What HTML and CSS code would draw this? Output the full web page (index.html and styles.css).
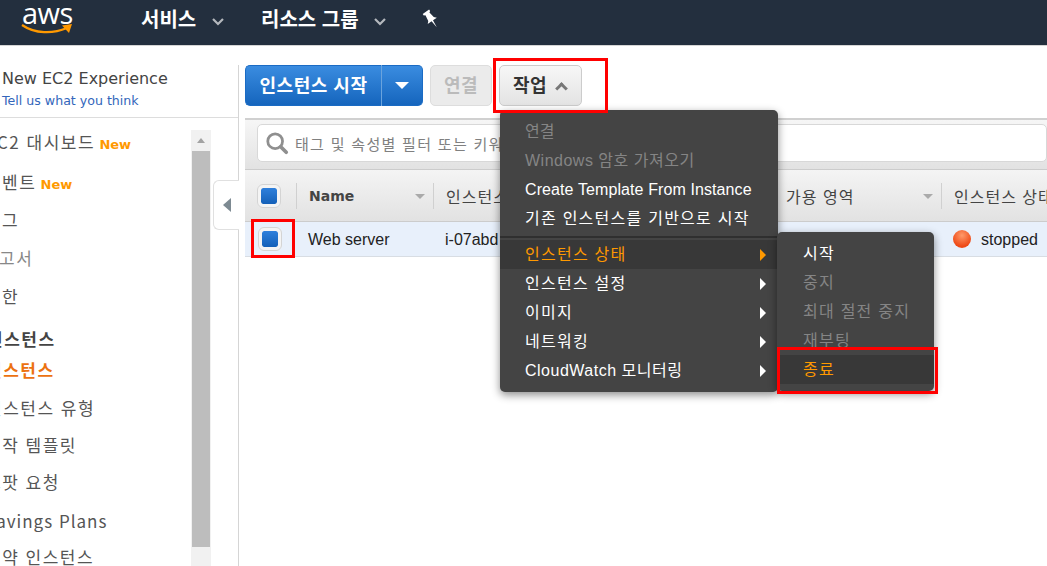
FILE: index.html
```html
<!DOCTYPE html>
<html lang="ko">

<head>
  <meta charset="UTF-8" />
  <meta name="viewport" content="width=device-width, initial-scale=1" />
  <title>EC2 인스턴스</title>
  <link rel="stylesheet" href="styles.css">
</head>

<body>
  <header class="topbar">
    <div class="logo">
      <span class="logo-text">aws</span>
      <svg class="logo-smile" width="52" height="11" viewBox="0 0 52 11">
        <path d="M1 1 C14 10 32 10 46 4" fill="none" stroke="#f90" stroke-width="2.2" />
        <path d="M41 1.5 L51 0 L48 9 Z" fill="#f90" />
      </svg>
    </div>
    <nav class="topnav">
      <span class="topnav-item services">서비스</span>
      <svg class="chev" width="12" height="8" viewBox="0 0 12 8"><path d="M1 1 L6 6 L11 1" fill="none" stroke="#b4b8bd" stroke-width="2.2" /></svg>
      <span class="topnav-item groups">리소스 그룹</span>
      <svg class="chev" width="12" height="8" viewBox="0 0 12 8"><path d="M1 1 L6 6 L11 1" fill="none" stroke="#b4b8bd" stroke-width="2.2" /></svg>
      <svg class="pin" width="18" height="20" viewBox="0 0 16 18">
        <path transform="rotate(-35 8 9)" d="M4.5 1 H11.5 V2.6 L10.2 3.4 L11 9 L13 11 H8.8 L8 18 L7.2 11 H3 L5 9 L5.8 3.4 L4.5 2.6 Z" fill="#fff" />
      </svg>
    </nav>
  </header>

  <div class="layout">
    <aside class="sidebar">
      <div class="promo">
        <div class="promo-title">New EC2 Experience</div>
        <div class="promo-link">Tell us what you think</div>
      </div>
      <div class="side-body">
        <ul class="side-list">
          <li class="r1">C2 대시보드 <b class="new">New</b></li>
          <li class="r2 cut">벤트 <b class="new">New</b></li>
          <li class="r3 cut">그</li>
          <li class="r4 grey">고서</li>
          <li class="r5 cut">한</li>
          <li class="r6 heading">인스턴스</li>
          <li class="r7 active">인스턴스</li>
          <li class="r8">인스턴스 유형</li>
          <li class="r9">시작 템플릿</li>
          <li class="r10">스팟 요청</li>
          <li class="r11">Savings Plans</li>
          <li class="r12">예약 인스턴스</li>
        </ul>
        <div class="scrollbar">
          <div class="scroll-up"></div>
          <div class="scroll-thumb"></div>
        </div>
      </div>
      <div class="collapse-tab"><span class="collapse-arrow"></span></div>
    </aside>

    <main class="content">
      <div class="toolbar">
        <div class="btn-split">
          <button class="btn btn-primary btn-start">인스턴스 시작</button>
          <button class="btn btn-primary btn-caret"><span class="caret-down"></span></button>
        </div>
        <button class="btn btn-disabled">연결</button>
        <button class="btn btn-action">작업 <span class="caret-up"></span></button>
      </div>

      <div class="searchbar">
        <div class="search-box">
          <svg width="24" height="24" viewBox="0 0 26 26">
            <circle cx="11" cy="11" r="8" fill="#fff" stroke="#8f8f8f" stroke-width="3" />
            <path d="M17 17 L23 23" stroke="#8f8f8f" stroke-width="4" stroke-linecap="round" />
          </svg>
          <span class="search-text">태그 및 속성별 필터 또는 키워</span>
        </div>
      </div>

      <div class="table-head">
        <div class="cell-check"><span class="check"></span></div>
        <div class="th th-name">Name<span class="sort"></span></div>
        <div class="th th-id">인스턴스</div>
        <div class="th th-type"></div>
        <div class="th th-zone">가용 영역<span class="sort"></span></div>
        <div class="th th-state">인스턴스 상태</div>
      </div>
      <div class="table-row">
        <div class="cell-check"><span class="check"></span></div>
        <div class="td td-name">Web server</div>
        <div class="td td-id">i-07abd</div>
        <div class="td td-gap"></div>
        <div class="td td-state"><span class="dot"></span>stopped</div>
      </div>
    </main>
  </div>

  <div class="menu menu-main">
    <div class="menu-item off">연결</div>
    <div class="menu-item off mixed">Windows 암호 가져오기</div>
    <div class="menu-item latin">Create Template From Instance</div>
    <div class="menu-item ko">기존 인스턴스를 기반으로 시작</div>
    <div class="menu-sep"></div>
    <div class="menu-item on sub ko">인스턴스 상태</div>
    <div class="menu-item sub ko">인스턴스 설정</div>
    <div class="menu-item sub ko">이미지</div>
    <div class="menu-item sub ko">네트워킹</div>
    <div class="menu-item sub mixed">CloudWatch 모니터링</div>
  </div>

  <div class="menu menu-sub">
    <div class="menu-item ko">시작</div>
    <div class="menu-item off ko">중지</div>
    <div class="menu-item off ko">최대 절전 중지</div>
    <div class="menu-item off ko">재부팅</div>
    <div class="menu-item on ko">종료</div>
  </div>

  <div class="mark mark-action"></div>
  <div class="mark mark-row"></div>
  <div class="mark mark-end"></div>
</body>

</html>
```

FILE: styles.css
```css
* {
  margin: 0;
  padding: 0;
  box-sizing: border-box;
}

html,
body {
  height: 100%;
  overflow: hidden;
}

body {
  font-family: 'DejaVu Sans', 'Noto Sans CJK KR', sans-serif;
  background: white;
  color: #444;
  position: relative;
}

/* top bar */
.topbar {
  height: 46px;
  background: #232f3e;
  display: flex;
  align-items: center;
  border-bottom: 1px solid #d5d5d5;
}

.logo {
  width: 141px;
  padding-left: 21px;
  height: 45px;
}

.logo-text {
  display: block;
  font-family: 'Open Sans', sans-serif;
  font-size: 29px;
  line-height: 20px;
  letter-spacing: -0.5px;
  color: white;
  margin-top: 3px;
  padding-left: 1px;
}

.logo-smile {
  display: block;
  margin-top: 1px;
}

.topnav {
  display: flex;
  align-items: center;
  color: white;
  margin-top: -9px;
}

.topnav-item {
  font-family: 'Noto Sans CJK KR', sans-serif;
  font-size: 20px;
  font-weight: 700;
}

.chev {
  margin-left: 15px;
  margin-top: 7px;
}

.services {
  width: 56px;
}

.groups {
  margin-left: 37px;
  width: 98px;
}

.pin {
  margin-left: 36px;
  margin-top: 2px;
}

/* layout */
.layout {
  display: flex;
  height: 520px;
}

.sidebar {
  width: 239px;
  margin-top: 19px;
  border-right: 1px solid #d5d5d5;
  position: relative;
  flex-shrink: 0;
}

.promo {
  height: 53px;
  border-bottom: 1px solid #ddd;
  padding-left: 2px;
}

.promo-title {
  font-size: 16px;
  line-height: 28px;
  color: #444;
}

.promo-link {
  font-size: 12.6px;
  line-height: 16px;
  color: #3366bb;
}

.side-body {
  display: flex;
  height: 448px;
  overflow: hidden;
  padding-top: 12px;
}

.side-list {
  list-style: none;
  width: 191px;
  overflow: hidden;
  font-size: 17px;
  color: #555;
  margin-top: -2px;
  letter-spacing: 1.5px;
}

.side-list li {
  height: 38px;
  line-height: 28px;
  white-space: nowrap;
  font-family: 'Noto Sans CJK KR', sans-serif;
}

.r1 {
  margin-left: -3px;
  height: 40px !important;
}

.cut {
  margin-left: 2px;
}

.grey {
  color: #888;
  margin-left: -1px;
}

.side-list .heading {
  font-weight: 700;
  color: #444;
  margin-left: -13px;
  margin-top: 5px;
  height: 31px !important;
}

.side-list .active {
  font-weight: 700;
  color: #ec7211;
  margin-left: -14px;
}

.r8 {
  margin-left: -14px;
  height: 37px !important;
}

.r9 {
  margin-left: -15px;
  height: 37px !important;
}

.r10 {
  margin-left: -15px;
  height: 39px !important;
}

.side-list .r11 {
  margin-left: -15px;
  height: 36px;
  letter-spacing: 1px;
}

.r12 {
  margin-left: -15px;
}

.new {
  font-family: 'DejaVu Sans', sans-serif;
  font-size: 13px;
  font-weight: 700;
  letter-spacing: 0;
  color: #ff9900;
  margin-left: -2px;
}

.scrollbar {
  width: 20px;
  background: #f1f1f1;
  height: 436px;
  padding: 0 1px;
}

.scroll-up {
  height: 21px;
  position: relative;
}

.scroll-up::after {
  content: "";
  position: absolute;
  left: 5px;
  top: 8px;
  border-left: 4px solid transparent;
  border-right: 4px solid transparent;
  border-bottom: 5px solid #a3a3a3;
}

.scroll-thumb {
  height: 396px;
  background: #bdbdbd;
}

.collapse-tab {
  position: absolute;
  left: 213px;
  top: 115px;
  width: 26px;
  height: 50px;
  background: white;
  border: 1px solid #e0e0e0;
  border-right: none;
  border-radius: 6px 0 0 6px;
  display: flex;
  align-items: center;
  justify-content: center;
}

.collapse-arrow {
  border-top: 7px solid transparent;
  border-bottom: 7px solid transparent;
  border-right: 8px solid #7d8a92;
}

/* main area */
.content {
  flex: 1;
  padding: 19px 0 0 6px;
  overflow: hidden;
}

.toolbar {
  display: flex;
  gap: 7px;
  height: 53px;
}

.btn {
  height: 41px;
  border-radius: 5px;
  font-family: 'Noto Sans CJK KR', sans-serif;
  font-size: 18px;
  font-weight: 700;
  letter-spacing: 0.5px;
  border: 1px solid #ccc;
  padding-bottom: 4px;
}

.btn-split {
  display: flex;
}

.btn-primary {
  color: white;
  background: linear-gradient(#3a8ce0, #1565bd);
  border-color: #1a6bc4;
}

.btn-start {
  width: 137px;
  border-radius: 5px 0 0 5px;
  border-right: 1px solid #6aa3dd;
}

.btn-caret {
  width: 41px;
  border-radius: 0 5px 5px 0;
  border-left: none;
  padding-bottom: 0;
  display: flex;
  align-items: center;
  justify-content: center;
}

.caret-down {
  border-left: 7px solid transparent;
  border-right: 7px solid transparent;
  border-top: 7px solid white;
}

.btn-disabled {
  width: 62px;
  color: #bbb;
  background: #ebebeb;
  border-color: #ddd;
}

.btn-action {
  width: 83px;
  color: #333;
  background: linear-gradient(#f7f7f7, #e3e3e3);
  display: flex;
  align-items: center;
  padding-left: 13px;
  gap: 10px;
}

.caret-up {
  width: 9px;
  height: 9px;
  border-left: 3px solid #777;
  border-top: 3px solid #777;
  transform: rotate(45deg);
  margin-top: 9px;
}

.searchbar {
  height: 52px;
  border-top: 2px solid #d0d0d0;
  background: linear-gradient(#f6f6f6, #e2e2e2);
  padding: 4px 0 0 12px;
  border-bottom: 1px solid #ccc;
}

.search-box {
  height: 38px;
  background: white;
  border: 1px solid #d8d8d8;
  border-radius: 5px;
  display: flex;
  align-items: center;
  padding-left: 7px;
  gap: 6px;
}

.search-text {
  font-family: 'Noto Sans CJK KR', sans-serif;
  font-size: 15px;
  color: #808080;
  white-space: nowrap;
  letter-spacing: 1.3px;
}

.table-head {
  display: flex;
  align-items: center;
  height: 52px;
  background: linear-gradient(#f4f4f4, #e2e2e2);
  border-bottom: 1px solid #ccc;
}

.cell-check {
  width: 51px;
  height: 100%;
  display: flex;
  align-items: center;
  padding-left: 13px;
  flex-shrink: 0;
}

.table-head .cell-check {
  padding-left: 12px;
}

.check {
  width: 24px;
  height: 24px;
  border-radius: 6px;
  border: 4px solid #f4f4f4;
  outline: 1px solid #d4d4d4;
  outline-offset: -1px;
  background: linear-gradient(#2f80dc, #1460b8) padding-box;
}

.th {
  font-size: 14px;
  font-weight: 700;
  color: #444;
  height: 26px;
  line-height: 26px;
  white-space: nowrap;
  border-left: 1px solid #d0d0d0;
  padding-left: 12px;
  position: relative;
  flex-shrink: 0;
  overflow: hidden;
}

.th-name {
  width: 137px;
}

.th-id,
.th-zone,
.th-state {
  font-family: 'Noto Sans CJK KR', sans-serif;
  font-size: 16px;
  font-weight: 400;
  letter-spacing: 1px;
}

.th-id {
  width: 170px;
}

.th-type {
  width: 170px;
}

.th-zone {
  width: 168px;
}

.th-state {
  width: 120px;
  overflow: visible;
}

.sort {
  position: absolute;
  right: 8px;
  top: 11px;
  border-left: 5px solid transparent;
  border-right: 5px solid transparent;
  border-top: 5px solid #aaa;
}

.table-row {
  display: flex;
  align-items: center;
  height: 35px;
  background: #e8f0fb;
  border-bottom: 1px solid #d8dde3;
  font-family: 'Liberation Sans', sans-serif;
  font-size: 16px;
  color: #222;
}

.td {
  padding-top: 2px;
}

.td-name {
  width: 137px;
  padding-left: 12px;
}

.td-id {
  width: 170px;
  padding-left: 12px;
}

.td-gap {
  width: 338px;
}

.td-state {
  display: flex;
  align-items: center;
  gap: 10px;
  padding-left: 12px;
}

.dot {
  width: 18px;
  height: 18px;
  border-radius: 50%;
  margin-top: -2px;
  background: radial-gradient(circle at 50% 30%, #ff9a6a, #ee4a17 70%);
}

/* dropdown menus */
.menu {
  position: absolute;
  background: #444;
  border-radius: 5px;
  box-shadow: 0 3px 8px rgba(0, 0, 0, 0.45);
  font-family: 'Liberation Sans', 'Noto Sans CJK KR', sans-serif;
  font-size: 16px;
  color: white;
}

.menu-main {
  left: 500px;
  top: 110px;
  width: 278px;
  height: 282px;
  padding-top: 7px;
}

.menu-sub {
  left: 777px;
  top: 232px;
  width: 157px;
  height: 159px;
  padding-top: 7px;
}

.menu-item {
  height: 29px;
  line-height: 29px;
  padding-left: 25px;
  white-space: nowrap;
  position: relative;
}

.menu-sub .menu-item {
  padding-left: 26px;
}

.ko {
  letter-spacing: 1.25px;
}

.mixed {
  letter-spacing: 0.5px;
}

.latin {
  letter-spacing: 0.1px;
}

.off {
  color: #858585;
}

.on {
  color: #ff9900;
  background: #383838;
}

.sub::after {
  content: "";
  position: absolute;
  right: 12px;
  top: 9px;
  border-top: 6px solid transparent;
  border-bottom: 6px solid transparent;
  border-left: 6px solid white;
}

.on.sub::after {
  border-left-color: #ff9900;
}

.menu-sep {
  height: 4px;
  margin: 3px 0 0;
  border-top: 2px solid #2f2f2f;
}

/* red annotation boxes */
.mark {
  position: absolute;
  border: 3px solid #ff0000;
}

.mark-action {
  left: 493px;
  top: 58px;
  width: 115px;
  height: 55px;
}

.mark-row {
  left: 251px;
  top: 219px;
  width: 44px;
  height: 39px;
}

.mark-end {
  left: 777px;
  top: 347px;
  width: 161px;
  height: 47px;
}
```
